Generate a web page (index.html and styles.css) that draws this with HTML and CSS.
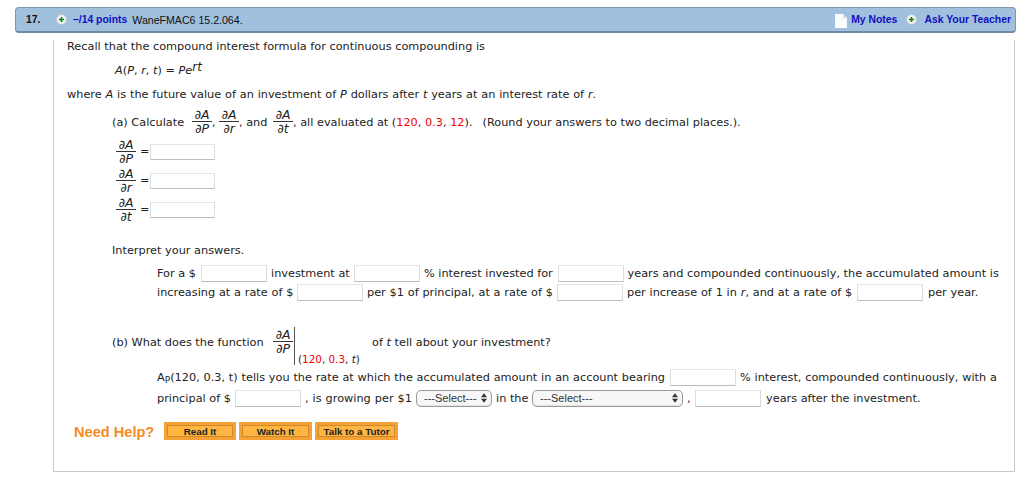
FILE: index.html
```html
<!DOCTYPE html>
<html lang="en">
<head>
<meta charset="utf-8">
<title>Question 17</title>
<link rel="stylesheet" href="styles.css">
</head>
<body>
<div class="page">
  <header class="bar">
    <div class="bar-left">
      <span class="qnum">17.</span>
      <svg class="plus" viewBox="0 0 12 12"><circle cx="6" cy="6" r="5.5" fill="#f1f3f1" stroke="#b9c3cb"/><path d="M6 3.2v5.6M3.2 6h5.6" stroke="#0a8a1e" stroke-width="1.8"/></svg>
      <b class="pts">–/14 points</b>
      <span class="ref">WaneFMAC6 15.2.064.</span>
    </div>
    <div class="bar-right">
      <svg class="note" viewBox="0 0 12 14"><path d="M0 0h8l4 4v10H0z" fill="#fbfcfd"/><path d="M8 0l4 4H8z" fill="#d5dbe0"/></svg>
      <b class="link notes">My Notes</b>
      <svg class="plus" viewBox="0 0 12 12"><circle cx="6" cy="6" r="5.5" fill="#f1f3f1" stroke="#b9c3cb"/><path d="M6 3.2v5.6M3.2 6h5.6" stroke="#0a8a1e" stroke-width="1.8"/></svg>
      <b class="link">Ask Your Teacher</b>
    </div>
  </header>
  <main class="sheet">
    <p class="line l-recall">Recall that the compound interest formula for continuous compounding is</p>
    <p class="line l-formula"><i>A</i>(<i>P</i>, <i>r</i>, <i>t</i>) = <i>Pe</i><sup class="exp"><i>rt</i></sup></p>
    <p class="line l-where">where <i>A</i> is the future value of an investment of <i>P</i> dollars after <i>t</i> years at an interest rate of <i>r</i>.</p>

    <div class="line l-calc">
      <span class="lead">(a) Calculate</span>
      <span class="frac"><i>∂A</i><i class="den">∂P</i></span><span class="comma">,</span>
      <span class="frac"><i>∂A</i><i class="den">∂r</i></span><span class="and">, and</span>
      <span class="frac"><i>∂A</i><i class="den">∂t</i></span><span>, all evaluated at (<span class="red">120</span>, <span class="red">0.3</span>, <span class="red">12</span>).<span class="round">(Round your answers to two decimal places.).</span></span>
    </div>
    <div class="answers">
      <div class="ans"><span class="frac"><i>∂A</i><i class="den">∂P</i></span><span>=</span><span class="field w-ans"></span></div>
      <div class="ans"><span class="frac"><i>∂A</i><i class="den">∂r</i></span><span>=</span><span class="field w-ans"></span></div>
      <div class="ans"><span class="frac"><i>∂A</i><i class="den">∂t</i></span><span>=</span><span class="field w-ans"></span></div>
    </div>
    <p class="line l-interpret">Interpret your answers.</p>
    <div class="fill l-for">
      <span class="c1">For a $</span><span class="field w-f"></span>
      <span class="c2">investment at</span><span class="field w-f"></span>
      <span class="c3">% interest invested for</span><span class="field w-f"></span>
      <span class="c4">years and compounded continuously, the accumulated amount is</span>
    </div>
    <div class="fill l-inc">
      <span class="c1b">increasing at a rate of $</span><span class="field w-f"></span>
      <span class="c2b">per $1 of principal, at a rate of $</span><span class="field w-f"></span>
      <span class="c3b">per increase of 1 in <i>r</i>, and at a rate of $</span><span class="field w-f"></span>
      <span class="c4b">per year.</span>
    </div>
    <div class="line l-b">
      <span class="lead-b">(b) What does the function</span>
      <span class="frac"><i>∂A</i><i class="den">∂P</i></span>
      <span class="eval"><span class="evalat">(<span class="red">120</span>, <span class="red">0.3</span>, <i>t</i>)</span></span>
      <span>of <i>t</i> tell about your investment?</span>
    </div>
    <div class="fill l-ap">
      <span class="c1c">A<sub class="subp">P</sub>(120, 0.3, t) tells you the rate at which the accumulated amount in an account bearing</span><span class="field w-f2"></span>
      <span class="c2c">% interest, compounded continuously, with a</span>
    </div>
    <div class="fill l-prin">
      <span class="c1d">principal of $</span><span class="field w-f2"></span>
      <span class="c2d">, is growing per $1</span>
      <span class="select s-small">---Select---<svg class="updown" viewBox="0 0 7 11"><path d="M3.5 0L7 4.5H0zM3.5 11L0 6.5h7z" fill="#333"/></svg></span>
      <span class="c3d">in the</span>
      <span class="select s-big">---Select---<svg class="updown" viewBox="0 0 7 11"><path d="M3.5 0L7 4.5H0zM3.5 11L0 6.5h7z" fill="#333"/></svg></span>
      <span class="c4d">,</span><span class="field w-f2"></span>
      <span class="c5d">years after the investment.</span>
    </div>
    <div class="help">
      <b class="need">Need Help?</b>
      <span class="btn b-read"><b>Read It</b></span>
      <span class="btn b-watch"><b>Watch It</b></span>
      <span class="btn b-talk"><b>Talk to a Tutor</b></span>
    </div>
  </main>
</div>
</body>
</html>
```
FILE: styles.css
```css
* { box-sizing: border-box; }
html, body { margin: 0; padding: 0; background: #fff; }
body { width: 1024px; height: 491px; overflow: hidden; font-family: "DejaVu Sans", Verdana, sans-serif; font-size: 11.3px; color: #222; }
p { margin: 0; }
.page { padding: 7px 0 0 15px; width: 1016px; }
.bar { height: 26px; background: #a0c0dd; border: 1px solid #7c98b0; border-bottom: 2px solid #6d8aa3; border-radius: 4px; display: flex; justify-content: space-between; align-items: center; font-family: "Liberation Sans", Arial, sans-serif; font-size: 10.4px; color: #111; }
.bar-left { display: flex; align-items: center; padding-left: 10px; }
.qnum { font-weight: bold; width: 30px; }
.plus { width: 11px; height: 11px; flex: none; }
.pts { color: #1010c0; margin-left: 6px; }
.ref { margin-left: 5px; font-size: 10.6px; }
.bar-right { display: flex; align-items: center; padding-right: 4px; }
.note { width: 12px; height: 14px; margin-top: 3px; }
.link { color: #1010c0; }
.notes { margin: 0 9px 0 4px; }
.bar-right .plus { margin-right: 7px; }
.sheet { margin-left: 38px; margin-right: 1px; height: 432px; border-left: 1px solid #c8c8c8; border-right: 1px solid #c8c8c8; border-bottom: 1px solid #c8c8c8; padding-left: 13px; }
.line, .fill { white-space: nowrap; }
.l-recall { margin-top: 7px; height: 14px; line-height: 14px; }
.l-formula { margin: 10px 0 0 48px; height: 14px; line-height: 14px; }
.exp { font-size: 12px; line-height: 0; vertical-align: 3px; }
.l-where { margin-top: 10px; height: 14px; line-height: 14px; word-spacing: 0.25px; }
.frac { display: inline-flex; flex-direction: column; align-items: center; width: 20px; font-size: 12.5px; line-height: 12px; }
.frac i:first-child { display: block; }
.den { display: block; width: 100%; text-align: center; border-top: 1px solid #333; line-height: 14px; }
.l-calc { margin: 6px 0 0 45px; display: flex; align-items: center; height: 28px; }
.lead { width: 80px; }
.comma { width: 7px; }
.and { width: 34px; }
.round { margin-left: 10px; }
.answers { margin: 1px 0 0 49px; }
.red { color: #f00000; }
.ans { display: flex; align-items: center; height: 29px; }
.ans .frac { margin: 2px 4px 0 0; }
.field { display: inline-block; height: 17px; border: 1px solid #dcdcdc; border-bottom-color: #bdbdbd; border-top-color: #e6e6e6; background: #fff; flex: none; }
.w-ans { width: 65px; height: 16px; margin-left: 1px; }
.l-interpret { margin: 20px 0 0 45px; height: 14px; line-height: 14px; }
.fill { display: flex; align-items: center; }
.l-for { margin: 6px 0 0 90px; height: 18px; }
.l-inc { margin: 1px 0 0 90px; height: 18px; word-spacing: 0.2px; }
.w-f { width: 66px; }
.w-f2 { width: 66px; }
.c1 { width: 44px; }
.c2 { width: 87px; padding-left: 4px; }
.c3 { width: 138px; padding-left: 4px; }
.c4 { padding-left: 3.5px; }
.c1b { width: 140px; }
.c2b { width: 194px; padding-left: 4px; }
.c3b { width: 234px; padding-left: 4px; }
.c4b { padding-left: 5px; }
.l-b { margin: 19px 0 0 45px; display: flex; align-items: center; height: 44px; }
.lead-b { width: 161px; }
.eval { display: inline-block; width: 78px; height: 38px; margin-top: 7px; margin-left: 1px; border-left: 1px solid #555; padding-left: 3px; align-self: flex-start; }
.evalat { display: block; margin-top: 25px; font-size: 10.4px; line-height: 14px; }
.l-ap { margin: 4px 0 0 90px; height: 18px; word-spacing: 0.2px; }
.l-prin { margin: 3px 0 0 90px; height: 18px; }
.subp { font-size: 9px; line-height: 0; vertical-align: -2px; }
.c1c { width: 513px; }
.c2c { padding-left: 4px; }
.c1d { width: 78px; }
.c2d { padding-left: 4px; width: 115px; word-spacing: 0.4px; }
.select { display: inline-flex; justify-content: space-between; align-items: center; height: 17px; border: 1px solid #9a9a9a; border-radius: 5px; background: #f7f7f7; font-family: "Liberation Sans", Arial, sans-serif; font-size: 11px; color: #333; padding: 0 4px 0 7px; box-shadow: inset 0 -1px 1px #e2e2e2; flex: none; }
.updown { width: 6px; height: 10px; }
.s-small { width: 76px; margin-right: 4px; }
.c3d { width: 32px; }
.s-big { width: 151px; margin-left: 4px; }
.c4d { width: 12px; padding-left: 4px; }
.c5d { padding-left: 5px; }
.help { display: flex; align-items: center; margin: 15px 0 0 7px; height: 18px; }
.need { font-family: "Liberation Sans", Arial, sans-serif; font-size: 14.6px; color: #f58a1f; width: 90px; padding-top: 2px; }
.btn { display: inline-flex; align-items: center; justify-content: center; height: 18px; background: #ffb53f; border: 3px solid #f7a033; box-shadow: inset 0 0 0 1px #c98a30; font-family: "Liberation Sans", Arial, sans-serif; font-size: 9.8px; color: #222; flex: none; }
.b-read { width: 72px; margin-right: 3px; }
.b-watch { width: 73px; margin-right: 3px; }
.b-talk { width: 83px; }
```
